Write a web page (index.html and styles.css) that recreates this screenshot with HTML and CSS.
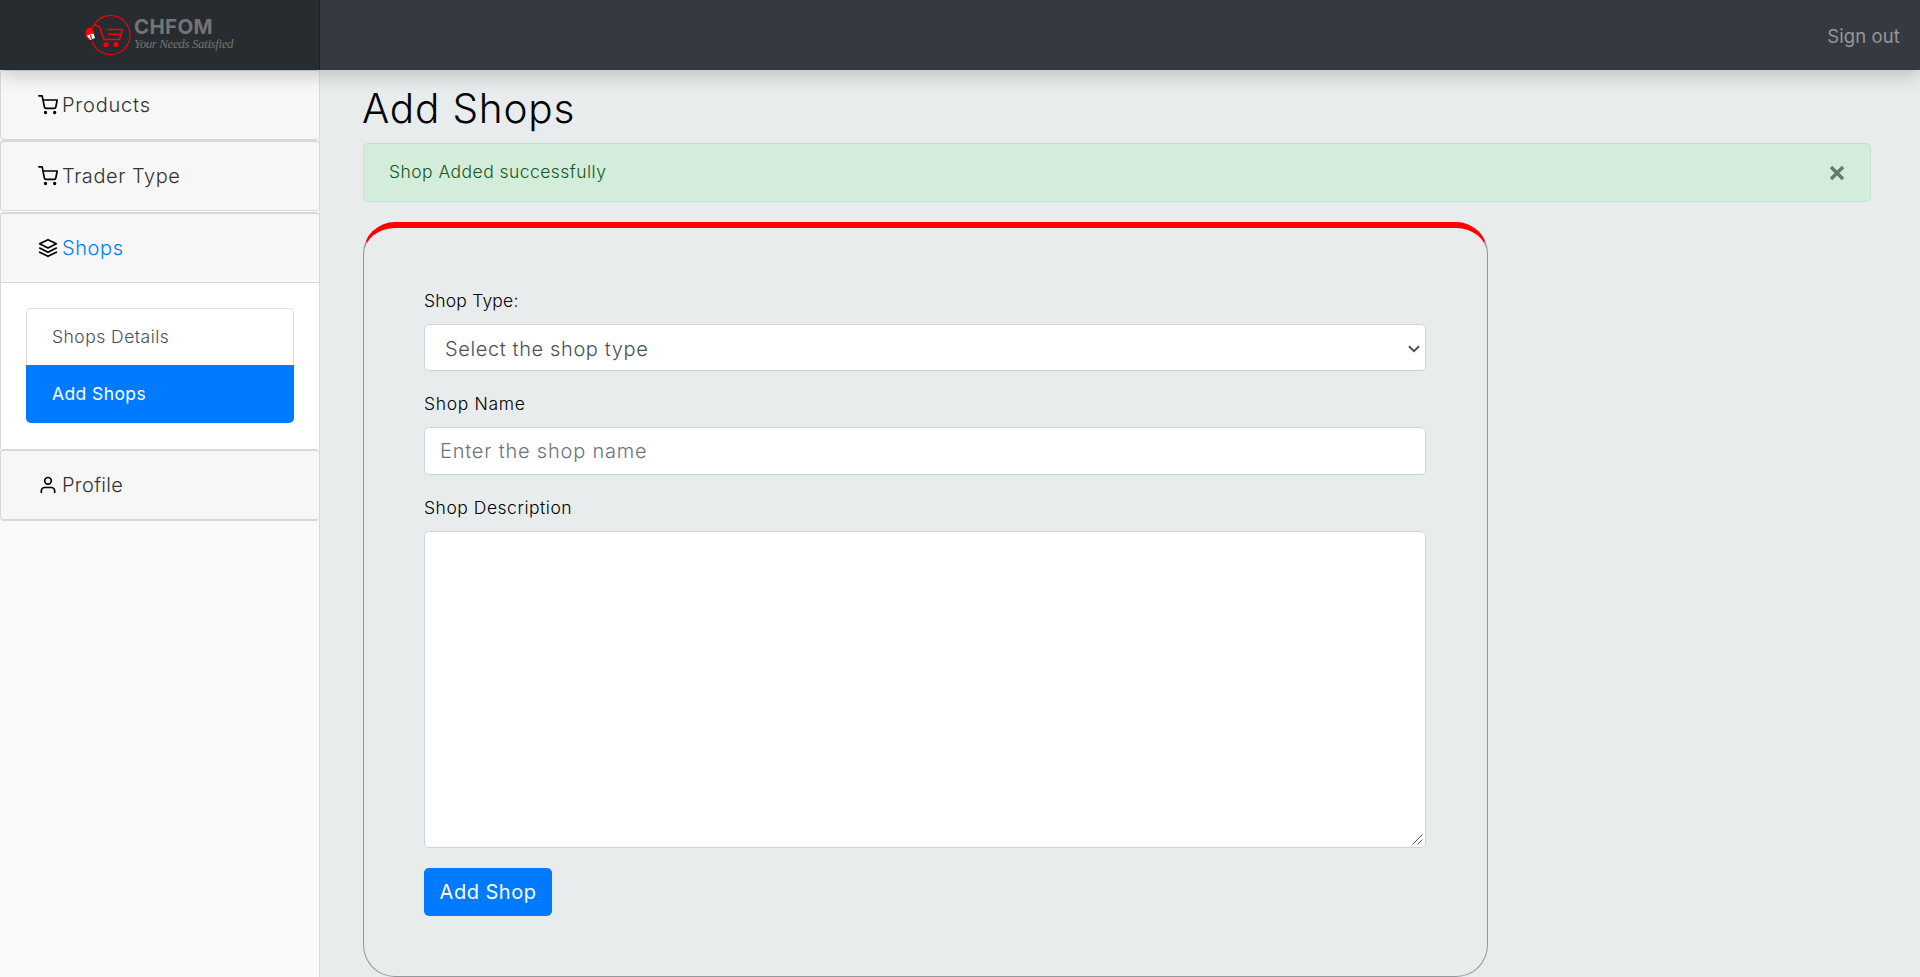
FILE: index.html
```
<!DOCTYPE html>
<html lang="en">
<head>
<meta charset="utf-8">
<title>Add Shops</title>
<link rel="stylesheet" href="styles.css">
</head>
<body>
<header class="navbar">
  <a class="brand">
    <svg class="logo-mark" width="50" height="44" viewBox="0 0 50 44" fill="none" stroke="#f00" stroke-width="1.100">
      <path d="M10.500 12A19.500 19.500 0 1 1 8 29"/>
      <path d="M10 12.200l5.500 2.500 4.500 12.800H35.500L38.500 17.500H23.500" stroke-width="1.500"/>
      <path d="M24 22.300H37" stroke-width="1.500"/>
      <path d="M8 15.500l3-3"/>
      <circle cx="22" cy="32.500" r="2.600" fill="#f00" stroke="none"/><circle cx="32" cy="32.500" r="2.600" fill="#f00" stroke="none"/>
      <path d="M2 18q3-4 7-1l1 7-6 3q-4-4-2-9z" fill="#f00" stroke="none"/>
      <path d="M3 23.500l6.500-2 1.500 4.500-5 2z" fill="#fff" stroke="none"/>
      <path d="M6.500 23l1 4"/>
    </svg>
    <span class="logo-text"><b class="logo-name">CHFOM</b><i class="logo-tag">Your Needs Satisfied</i></span>
  </a>
  <a class="signout">Sign out</a>
</header>
<div class="layout">
  <nav class="sidebar">
    <div class="item"><svg class="icon" viewBox="0 0 24 24"><circle cx="9" cy="21" r="1"/><circle cx="20" cy="21" r="1"/><path d="M1 1h4l2.680 13.390a2 2 0 0 0 2 1.610h9.720a2 2 0 0 0 2-1.610L23 6H6"/></svg><span class="t-products">Products</span></div>
    <div class="item second"><svg class="icon" viewBox="0 0 24 24"><circle cx="9" cy="21" r="1"/><circle cx="20" cy="21" r="1"/><path d="M1 1h4l2.680 13.390a2 2 0 0 0 2 1.610h9.720a2 2 0 0 0 2-1.610L23 6H6"/></svg><span class="t-trader">Trader Type</span></div>
    <div class="item third"><svg class="icon" viewBox="0 0 24 24"><path d="M12 2 2 7l10 5 10-5-10-5zM2 17l10 5 10-5M2 12l10 5 10-5"/></svg><span class="t-shops">Shops</span></div>
    <div class="submenu">
      <div class="sub"><span class="t-details">Shops Details</span></div>
      <div class="sub active"><span class="t-addshops">Add Shops</span></div>
    </div>
    <div class="item last"><svg class="icon" viewBox="0 0 24 24"><path d="M20 21v-2a4 4 0 0 0-4-4H8a4 4 0 0 0-4 4v2"/><circle cx="12" cy="7" r="4"/></svg><span class="t-profile">Profile</span></div>
  </nav>
  <main class="main">
    <h1 class="title"><span class="t-title">Add Shops</span></h1>
    <div class="alert"><span class="t-alert">Shop Added successfully</span>
      <svg class="close" width="16" height="16" viewBox="0 0 16 16"><path d="M2 2l12 12M14 2L2 14"/></svg>
    </div>
    <form class="card">
      <label class="label"><span class="t-type">Shop Type:</span></label>
      <div class="field select"><span class="t-select">Select the shop type</span>
        <svg width="12" height="8" viewBox="0 0 12 8"><path d="M1 1.200l5 5 5-5"/></svg></div>
      <label class="label name"><span class="t-name">Shop Name</span></label>
      <div class="field input"><span class="t-input">Enter the shop name</span></div>
      <label class="label desc"><span class="t-desc">Shop Description</span></label>
      <div class="field area"><svg width="11" height="11" viewBox="0 0 11 11"><path d="M.5 10.500l10-10M5.500 10.500l5-5"/></svg></div>
      <button type="button" class="button"><span class="t-button">Add Shop</span></button>
    </form>
  </main>
</div>
</body>
</html>
```
FILE: styles.css
```
* { box-sizing: border-box; }
body { margin: 0; height: 977px; overflow: hidden; background: #e8eced; color: #000; font: 300 17.500px/26px Inter, "Open Sans", sans-serif; }
span { white-space: nowrap; }
.navbar { position: relative; z-index: 2; display: flex; align-items: center; justify-content: space-between; height: 70px; padding-right: 20px; background: #353a42; box-shadow: 0 8px 16px rgba(0,0,0,.15); }
.brand { display: flex; width: 320px; height: 70px; padding: 12px 0 0 84px; background: #282c30; box-shadow: inset -1px 0 0 rgba(0,0,0,.25); }
.logo-mark { flex: none; }
.logo-text { display: flex; flex-direction: column; padding-top: 5px; color: #747474; }
.logo-name { font-size: 20.500px; line-height: 20px; font-weight: 700; letter-spacing: .3px; }
.logo-tag { font: italic 13px/13px "Liberation Serif", serif; letter-spacing: -.4px; }
.signout { padding-top: 1px; color: #949699; font-size: 18.500px; font-weight: 400; letter-spacing: .1px; }
.layout { display: flex; height: 907px; }
.sidebar { width: 320px; flex: none; background: #f8f9fb; border-right: 1px solid #d9dbdc; }
.item { display: flex; align-items: center; height: 70px; padding-left: 37px; border: 1px solid #d7d8d9; border-right: 0; border-radius: 4px; background: #f7f7f7; color: #333; font-size: 20px; }
.item span { padding-bottom: 1px; }
.second { height: 71px; border-top-width: 2px; }
.third { margin-top: 1px; height: 71px; border-top-width: 2px; border-radius: 4px 4px 0 0; }
.last { height: 72px; border-top-width: 2px; border-bottom-width: 2px; }
.icon { width: 20px; height: 20px; margin-right: 4px; fill: none; stroke: #000; stroke-width: 2; stroke-linecap: round; stroke-linejoin: round; }
.t-products { letter-spacing: .8px; }
.t-trader { letter-spacing: .55px; }
.t-shops { color: #007bff; letter-spacing: .6px; }
.t-profile { letter-spacing: .3px; }
.t-details { letter-spacing: .48px; }
.t-addshops { letter-spacing: .4px; }
.t-title { letter-spacing: .8px; margin-left: -1px; }
.t-alert { letter-spacing: .45px; }
.t-type { letter-spacing: .2px; }
.t-name { letter-spacing: .68px; }
.t-desc { letter-spacing: .52px; }
.t-select { letter-spacing: .62px; font-weight: 350; }
.t-input { letter-spacing: .8px; }
.t-button { letter-spacing: .5px; }
.submenu { height: 166px; padding: 25px 25px 0; background: #fff; border-left: 1px solid #d7d8d9; }
.sub { display: flex; align-items: center; height: 57px; padding-left: 25px; border: 1px solid #dfdfdf; border-bottom: 0; border-radius: 5px 5px 0 0; color: #495057; font-size: 17.500px; }
.active { height: 58px; padding-bottom: 2px; border-color: #007bff; border-radius: 0 0 5px 5px; background: #007bff; color: #fff; font-weight: 400; }
.main { flex: 1; padding: 19px 49px 0 43px; }
.title { height: 54px; margin: 0; font-size: 40.500px; line-height: 40px; font-weight: 300; }
.alert { display: flex; align-items: center; justify-content: space-between; height: 59px; padding: 0 25px 1px; border: 1px solid #c3e6cb; border-radius: 5px; background: #d4edda; color: #155724; }
.close { margin-top: 2px; stroke: #6a776d; stroke-width: 3.400; fill: none; }
.card { width: 1125px; height: 755px; margin-top: 20px; padding: 64px 61px 0 60px; border: 1px solid #93999b; border-top: 6px solid #f00; border-radius: 32px; }
.label { display: block; height: 32px; line-height: 18px; }
.name { margin-top: 24px; }
.desc { margin-top: 24px; }
.field { display: flex; align-items: center; height: 47px; border: 1px solid #ced4da; border-radius: 5px; background: #fff; font-size: 20px; }
.select { justify-content: space-between; padding: 2px 5px 0 20px; color: #495057; }
.select svg { fill: none; stroke: #495057; stroke-width: 2; }
.input { height: 48px; padding-left: 15px; color: #6c757d; }
.area { height: 317px; align-items: flex-end; justify-content: flex-end; padding: 2px; }
.area svg { fill: none; stroke: #555; stroke-width: 1; }
.button { height: 48px; width: 128px; margin-top: 20px; padding: 0; border: 0; border-radius: 5px; background: #007bff; color: #fff; font: 400 20px Inter, sans-serif; }
```
